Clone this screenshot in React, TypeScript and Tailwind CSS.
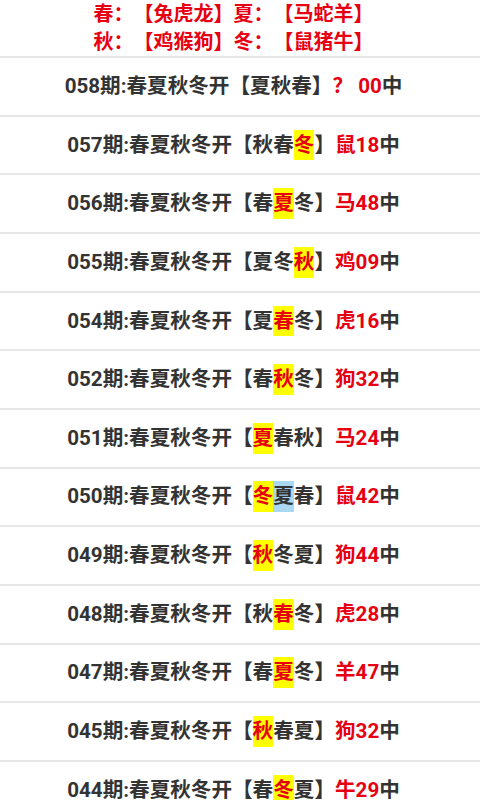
import React from 'react'

interface Row {
  no: string
  chars: string[]
  hl: number
  blue?: number
  animal: string
  num: string
}

const rows: Row[] = [
  { no: '058', chars: ['夏', '秋', '春'], hl: -1, animal: '？', num: ' 00' },
  { no: '057', chars: ['秋', '春', '冬'], hl: 2, animal: '鼠', num: '18' },
  { no: '056', chars: ['春', '夏', '冬'], hl: 1, animal: '马', num: '48' },
  { no: '055', chars: ['夏', '冬', '秋'], hl: 2, animal: '鸡', num: '09' },
  { no: '054', chars: ['夏', '春', '冬'], hl: 1, animal: '虎', num: '16' },
  { no: '052', chars: ['春', '秋', '冬'], hl: 1, animal: '狗', num: '32' },
  { no: '051', chars: ['夏', '春', '秋'], hl: 0, animal: '马', num: '24' },
  { no: '050', chars: ['冬', '夏', '春'], hl: 0, blue: 1, animal: '鼠', num: '42' },
  { no: '049', chars: ['秋', '冬', '夏'], hl: 0, animal: '狗', num: '44' },
  { no: '048', chars: ['秋', '春', '冬'], hl: 1, animal: '虎', num: '28' },
  { no: '047', chars: ['春', '夏', '冬'], hl: 1, animal: '羊', num: '47' },
  { no: '045', chars: ['秋', '春', '夏'], hl: 0, animal: '狗', num: '32' },
  { no: '044', chars: ['春', '冬', '夏'], hl: 1, animal: '牛', num: '29' },
]

const font = { fontFamily: 'Roboto, "Noto Sans CJK SC", sans-serif' }

const App = () => {
  return (
    <div className="w-[480px] bg-white font-bold [text-spacing-trim:space-all]" style={font}>
      <div className="flex flex-col items-center pr-[13px] text-[20px] leading-[28px] text-[#e60012] border-b-2 border-[#e6e6e6]">
        <p>春：【兔虎龙】夏：【马蛇羊】</p>
        <p>秋：【鸡猴狗】冬：【鼠猪牛】</p>
      </div>
      {rows.map((r) => (
        <div
          key={r.no}
          className="h-[58.67px] flex items-center justify-center pr-[13px] border-b-2 border-[#e6e6e6] text-[20.6px] text-[#333333]"
        >
          <span>{r.no}期:春夏秋冬开【</span>
          {r.chars.map((c, i) =>
            i === r.hl ? (
              <span key={i} className="bg-[#ffff00] text-[#e60012]">{c}</span>
            ) : i === r.blue ? (
              <span key={i} className="bg-[#a9d8f0]">{c}</span>
            ) : (
              <span key={i}>{c}</span>
            )
          )}
          <span>】</span>
          <span className="text-[#e60012] whitespace-pre">{r.animal}{r.num}</span>
          <span>中</span>
        </div>
      ))}
    </div>
  )
}

export default App
